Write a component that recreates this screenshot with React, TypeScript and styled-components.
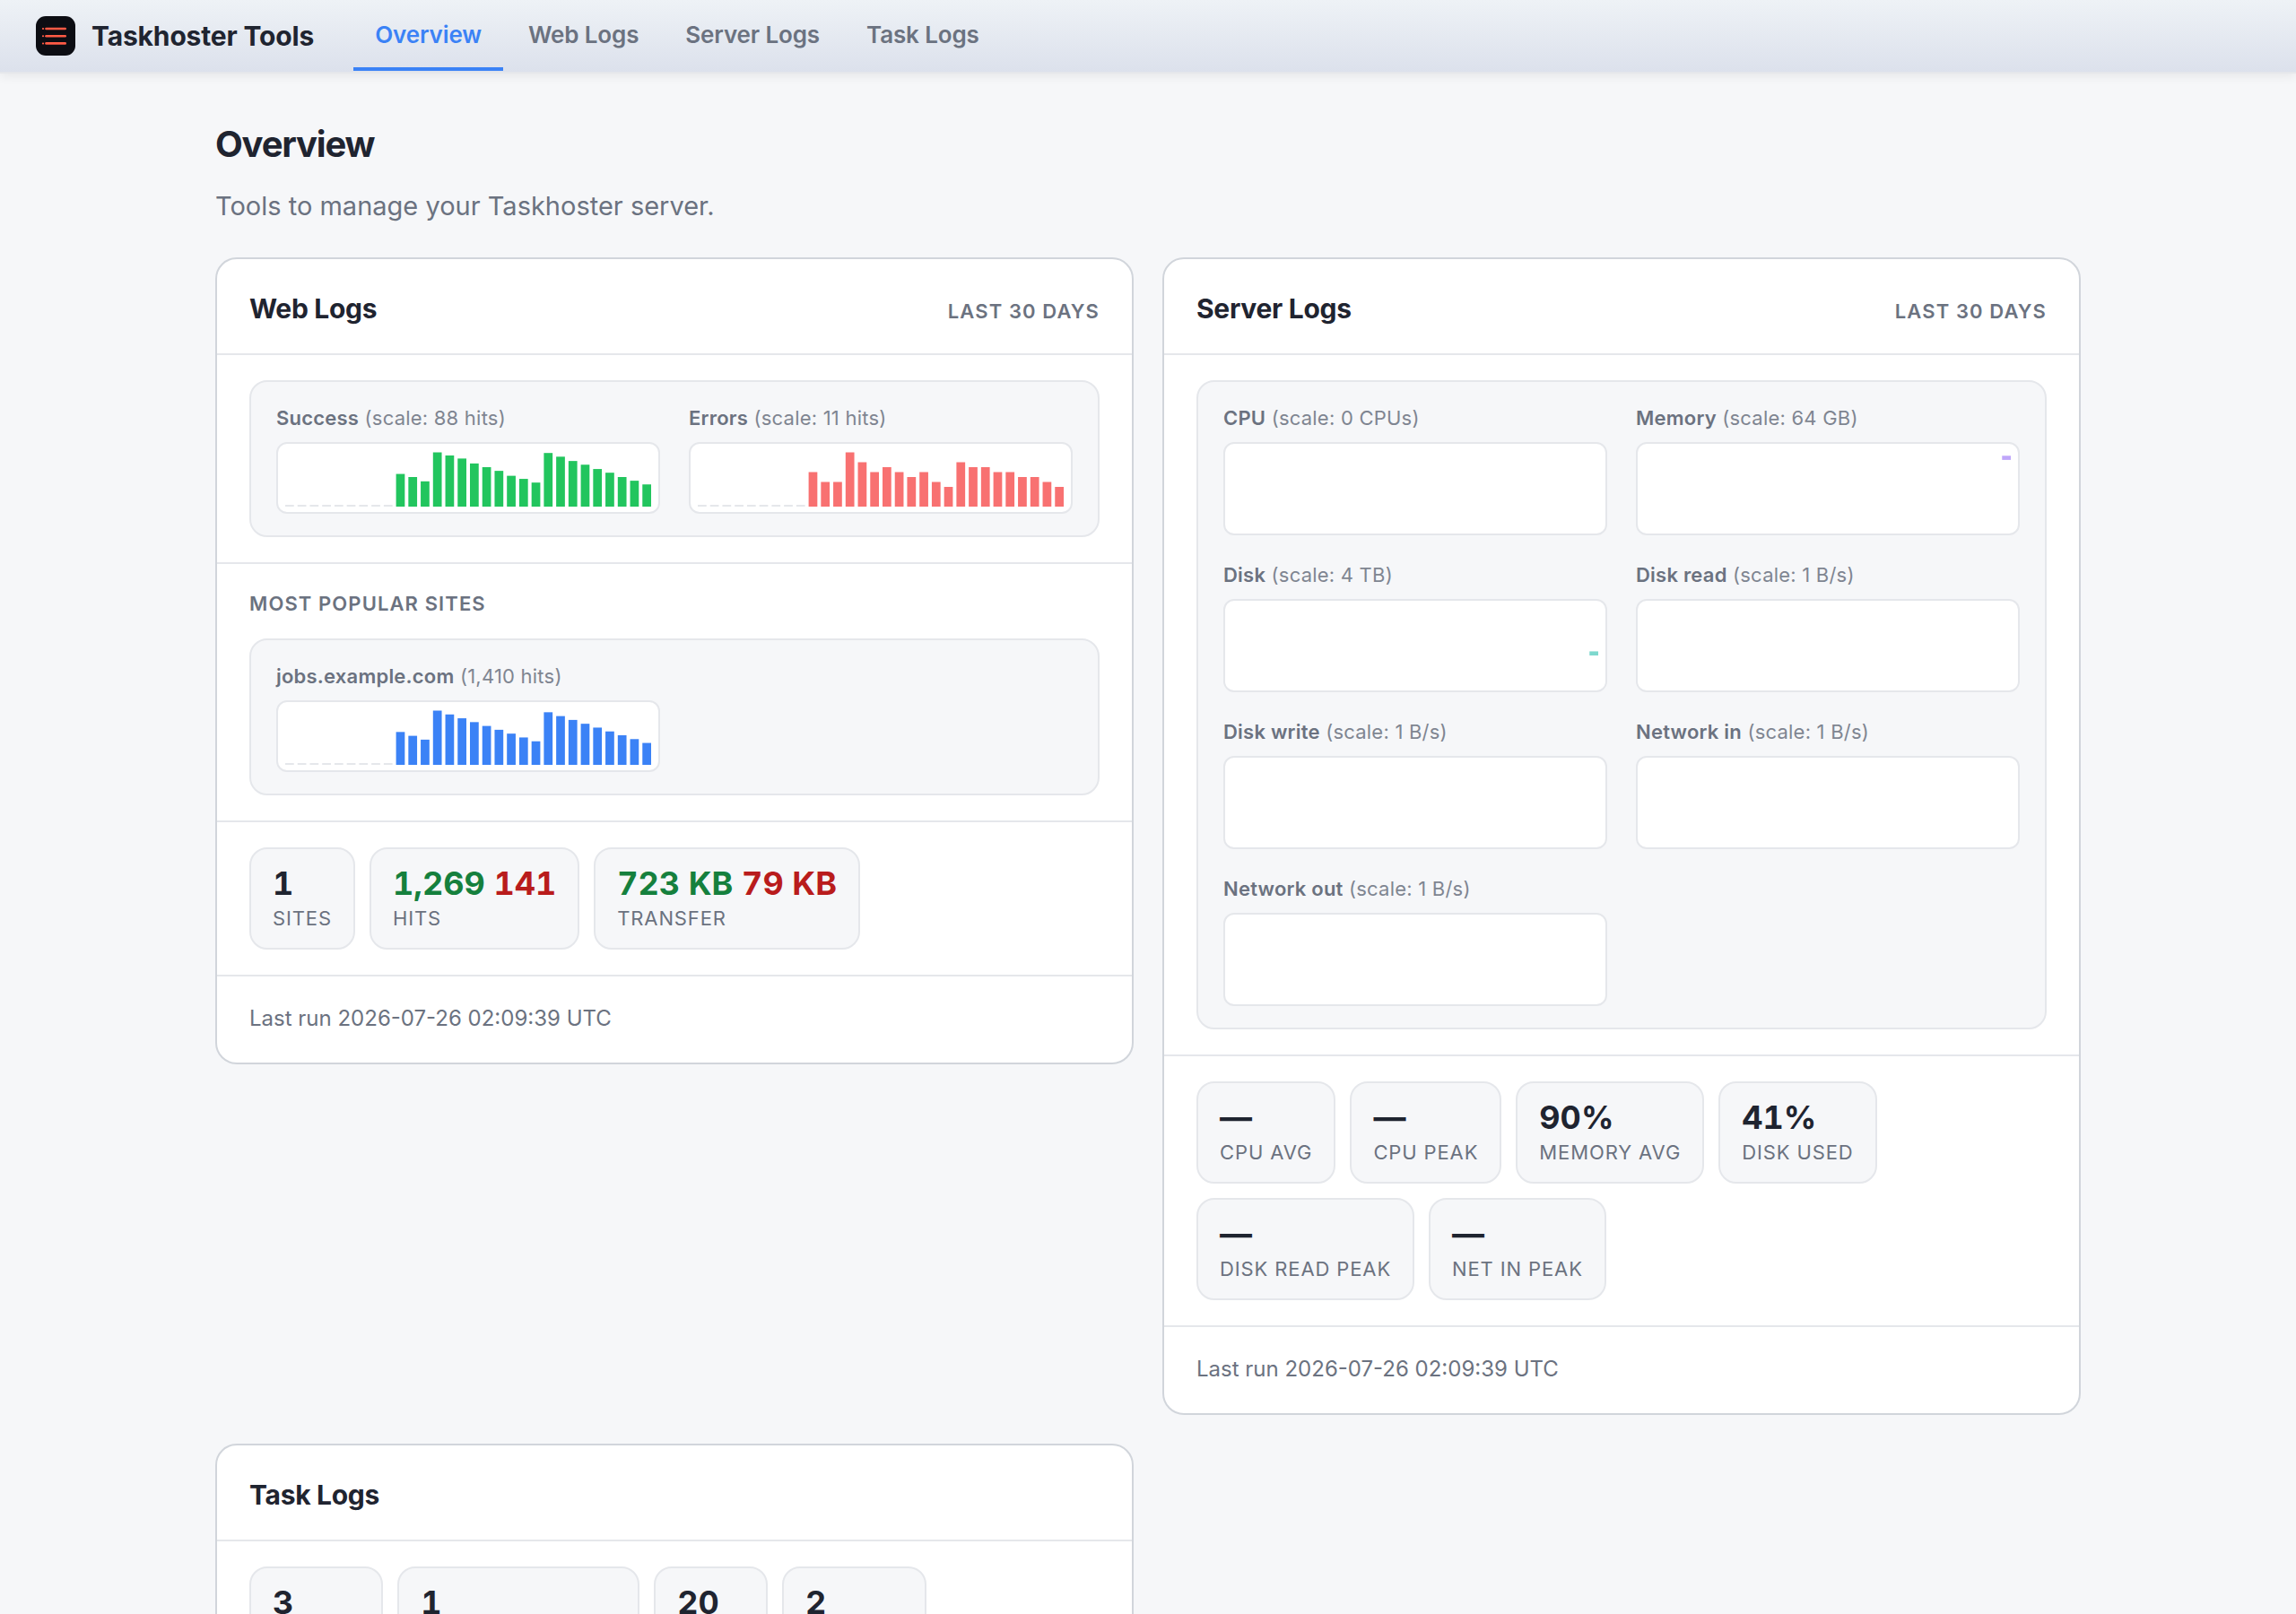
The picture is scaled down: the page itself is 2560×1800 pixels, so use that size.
import React from "react";
import styled, { createGlobalStyle } from "styled-components";

const GlobalStyle = createGlobalStyle`
  *, *::before, *::after { box-sizing: border-box; }
  body {
    margin: 0;
    background: #f6f7f9;
    color: #1f2430;
    font-family: Inter, "Liberation Sans", sans-serif;
    font-size: 30px;
    line-height: 47px;
  }
`;

const Header = styled.header`
  display: flex;
  align-items: center;
  gap: 44px;
  min-height: 82px;
  padding: 0 40px;
  background: linear-gradient(180deg, #eef2f6 0%, #dce1ec 100%);
  border-bottom: 2px solid #e5e7eb;
  box-shadow: 0 2px 12px rgba(0, 0, 0, 0.08);
`;

const Brand = styled.a`
  display: flex;
  align-items: center;
  gap: 18px;
  color: inherit;
  font-weight: 700;
  text-decoration: none;
  letter-spacing: -0.005em;
`;

const Nav = styled.nav`
  display: flex;
  gap: 4px;
`;

const Tab = styled.a<{ $active?: boolean }>`
  padding: 18px 24px 16px;
  border-bottom: 4px solid ${(p) => (p.$active ? "#3b82f6" : "transparent")};
  color: ${(p) => (p.$active ? "#3b82f6" : "#6b7280")};
  font-size: 26px;
  line-height: 40px;
  font-weight: 600;
  letter-spacing: -0.005em;
  text-decoration: none;
`;

const Main = styled.main`
  max-width: 2160px;
  margin: 0 auto;
  padding: 48px 40px;
`;

const PageTitle = styled.h1`
  margin: 0 0 14px;
  font-size: 40px;
  line-height: 62px;
  font-weight: 700;
  letter-spacing: -0.03em;
`;

const Lead = styled.p`
  margin: 0 0 34px;
  color: #6b7280;
  font-size: 29px;
`;

const CardGrid = styled.div`
  display: grid;
  grid-template-columns: repeat(2, minmax(0, 1fr));
  gap: 32px;
  align-items: start;
`;

const Card = styled.section`
  background: #fff;
  border: 2px solid #d1d5db;
  border-radius: 24px;
`;

const CardHeader = styled.header`
  display: flex;
  align-items: baseline;
  justify-content: space-between;
  padding: 32px 36px 26px;
`;

const CardTitle = styled.h2`
  margin: 0;
  font-size: 30px;
  line-height: 47px;
  font-weight: 700;
  letter-spacing: -0.01em;
`;

const Period = styled.span`
  color: #6b7280;
  font-size: 22px;
  line-height: 33px;
  font-weight: 600;
  letter-spacing: 0.05em;
  text-transform: uppercase;
`;

const CardSection = styled.div`
  padding: 28px 36px;
  border-top: 2px solid #e5e7eb;
`;

const SectionTitle = styled.h3`
  margin: 0 0 22px;
  color: #6b7280;
  font-size: 22px;
  line-height: 33px;
  font-weight: 600;
  letter-spacing: 0.05em;
  text-transform: uppercase;
`;

const CardFooter = styled.footer`
  padding: 28px 36px 30px;
  border-top: 2px solid #e5e7eb;
  color: #6b7280;
  font-size: 24px;
  line-height: 38px;
`;

const Panel = styled.div`
  display: grid;
  grid-template-columns: repeat(2, minmax(0, 1fr));
  gap: 28px 32px;
  padding: 24px 28px;
  background: #f6f7f9;
  border: 2px solid #e5e7eb;
  border-radius: 20px;
`;

const Figure = styled.figure`
  margin: 0;
`;

const Caption = styled.figcaption`
  margin-bottom: 10px;
  color: #6b7280;
  font-size: 22px;
  line-height: 33px;
  letter-spacing: 0.01em;
`;

const CaptionName = styled.strong`
  font-weight: 600;
`;

const CaptionNote = styled.span`
  opacity: 0.85;
`;

const Plot = styled.div`
  padding: 6px 8px;
  background: #fff;
  border: 2px solid #e5e7eb;
  border-radius: 12px;
`;

const PlotSvg = styled.svg<{ $height: number }>`
  display: block;
  width: 100%;
  height: ${(p) => p.$height}px;
`;

const Stats = styled.dl`
  display: flex;
  flex-wrap: wrap;
  gap: 16px;
  margin: 0;
`;

const Stat = styled.div`
  display: flex;
  flex-direction: column-reverse;
  gap: 4px;
  padding: 18px 24px;
  background: #f6f7f9;
  border: 2px solid #e5e7eb;
  border-radius: 20px;
`;

const StatLabel = styled.dt`
  color: #6b7280;
  font-size: 22px;
  line-height: 30px;
  letter-spacing: 0.04em;
  text-transform: uppercase;
`;

const StatValue = styled.dd`
  margin: 0;
  font-size: 36px;
  line-height: 40px;
  font-weight: 700;
  font-variant-numeric: tabular-nums;
`;

const Good = styled.span`
  color: #15803d;
`;

const Bad = styled.span`
  color: #b91c1c;
`;

const successHits = [53, 48, 41, 88, 83, 78, 70, 64, 58, 50, 45, 39, 87, 81, 74, 68, 61, 55, 48, 42, 36];
const errorHits = [7, 5, 5, 11, 9, 7, 8, 7, 6, 7, 5, 4, 9, 8, 8, 7, 7, 6, 6, 5, 4];
const siteHits = successHits.map((n, i) => n + errorHits[i]);

const DAYS = 30;
const PLOT_WIDTH = 408;
const BAR_GAP = 4;
const BAR_WIDTH = (PLOT_WIDTH - BAR_GAP * (DAYS - 1)) / DAYS;

function BarChart({ name, note, values, color }: { name: string; note: string; values: number[]; color: string }) {
  const days = [...Array(DAYS - values.length).fill(0), ...values];
  const max = Math.max(...values);
  return (
    <Figure>
      <Caption>
        <CaptionName>{name}</CaptionName> <CaptionNote>({note})</CaptionNote>
      </Caption>
      <Plot>
        <PlotSvg $height={64} viewBox={`0 0 ${PLOT_WIDTH} 64`} preserveAspectRatio="none" role="img" aria-label={name}>
          {days.map((n, i) => {
            const h = n ? (n / max) * 60.5 : 2;
            return (
              <rect key={i} x={i * (BAR_WIDTH + BAR_GAP)} y={64 - h} width={BAR_WIDTH} height={h} fill={n ? color : "#e5e7eb"} />
            );
          })}
        </PlotSvg>
      </Plot>
    </Figure>
  );
}

type Gauge = { name: string; scale: string; level?: number; color?: string };

const gauges: Gauge[] = [
  { name: "CPU", scale: "0 CPUs" },
  { name: "Memory", scale: "64 GB", level: 0.9, color: "#8b5cf6" },
  { name: "Disk", scale: "4 TB", level: 0.41, color: "#14b8a6" },
  { name: "Disk read", scale: "1 B/s" },
  { name: "Disk write", scale: "1 B/s" },
  { name: "Network in", scale: "1 B/s" },
  { name: "Network out", scale: "1 B/s" },
];

function GaugeChart({ name, scale, level, color }: Gauge) {
  return (
    <Figure>
      <Caption>
        <CaptionName>{name}</CaptionName> <CaptionNote>(scale: {scale})</CaptionNote>
      </Caption>
      <Plot>
        <PlotSvg $height={88} viewBox={`0 0 ${PLOT_WIDTH} 88`} preserveAspectRatio="none" role="img" aria-label={name}>
          {level !== undefined && (
            <rect
              x={PLOT_WIDTH - BAR_WIDTH}
              y={86.5 - level * 88}
              width={BAR_WIDTH}
              height={4.6}
              fill={color}
              fillOpacity={0.55}
            />
          )}
        </PlotSvg>
      </Plot>
    </Figure>
  );
}

function StatBox({ label, children }: { label: string; children: React.ReactNode }) {
  return (
    <Stat>
      <StatLabel>{label}</StatLabel>
      <StatValue>{children}</StatValue>
    </Stat>
  );
}

function Logo() {
  return (
    <svg width="44" height="44" viewBox="0 0 44 44" aria-hidden="true">
      <rect width="44" height="44" rx="11" fill="#0c0d13" />
      {[14, 22.2, 30.4].map((y) => (
        <g key={y} stroke="#ff5a45" strokeLinecap="round">
          <path d={`M11.5 ${y}H32.7`} strokeWidth="2.6" />
          <path d={`M7.9 ${y}h.2`} strokeWidth="2" />
        </g>
      ))}
    </svg>
  );
}

export default function App() {
  return (
    <>
      <GlobalStyle />
      <Header>
        <Brand href="#">
          <Logo />
          Taskhoster Tools
        </Brand>
        <Nav aria-label="Tools">
          <Tab href="#" $active aria-current="page">Overview</Tab>
          <Tab href="#web">Web Logs</Tab>
          <Tab href="#server">Server Logs</Tab>
          <Tab href="#tasks">Task Logs</Tab>
        </Nav>
      </Header>
      <Main>
        <PageTitle>Overview</PageTitle>
        <Lead>Tools to manage your Taskhoster server.</Lead>
        <CardGrid>
          <Card id="web">
            <CardHeader>
              <CardTitle>Web Logs</CardTitle>
              <Period>Last 30 days</Period>
            </CardHeader>
            <CardSection>
              <Panel>
                <BarChart name="Success" note="scale: 88 hits" values={successHits} color="#22c55e" />
                <BarChart name="Errors" note="scale: 11 hits" values={errorHits} color="#f87171" />
              </Panel>
            </CardSection>
            <CardSection>
              <SectionTitle>Most popular sites</SectionTitle>
              <Panel>
                <BarChart name="jobs.example.com" note="1,410 hits" values={siteHits} color="#3b82f6" />
              </Panel>
            </CardSection>
            <CardSection>
              <Stats>
                <StatBox label="Sites">1</StatBox>
                <StatBox label="Hits">
                  <Good>1,269</Good> <Bad>141</Bad>
                </StatBox>
                <StatBox label="Transfer">
                  <Good>723 KB</Good> <Bad>79 KB</Bad>
                </StatBox>
              </Stats>
            </CardSection>
            <CardFooter>Last run 2026-07-26 02:09:39 UTC</CardFooter>
          </Card>
          <Card id="server">
            <CardHeader>
              <CardTitle>Server Logs</CardTitle>
              <Period>Last 30 days</Period>
            </CardHeader>
            <CardSection>
              <Panel>
                {gauges.map((g) => (
                  <GaugeChart key={g.name} {...g} />
                ))}
              </Panel>
            </CardSection>
            <CardSection>
              <Stats>
                <StatBox label="CPU avg">—</StatBox>
                <StatBox label="CPU peak">—</StatBox>
                <StatBox label="Memory avg">90%</StatBox>
                <StatBox label="Disk used">41%</StatBox>
                <StatBox label="Disk read peak">—</StatBox>
                <StatBox label="Net in peak">—</StatBox>
              </Stats>
            </CardSection>
            <CardFooter>Last run 2026-07-26 02:09:39 UTC</CardFooter>
          </Card>
          <Card id="tasks">
            <CardHeader>
              <CardTitle>Task Logs</CardTitle>
            </CardHeader>
            <CardSection>
              <Stats>
                <StatBox label="Queued">3</StatBox>
                <StatBox label="Enabled servers">1</StatBox>
                <StatBox label="Tasks">20</StatBox>
                <StatBox label="Failures">2</StatBox>
              </Stats>
            </CardSection>
          </Card>
        </CardGrid>
      </Main>
    </>
  );
}
